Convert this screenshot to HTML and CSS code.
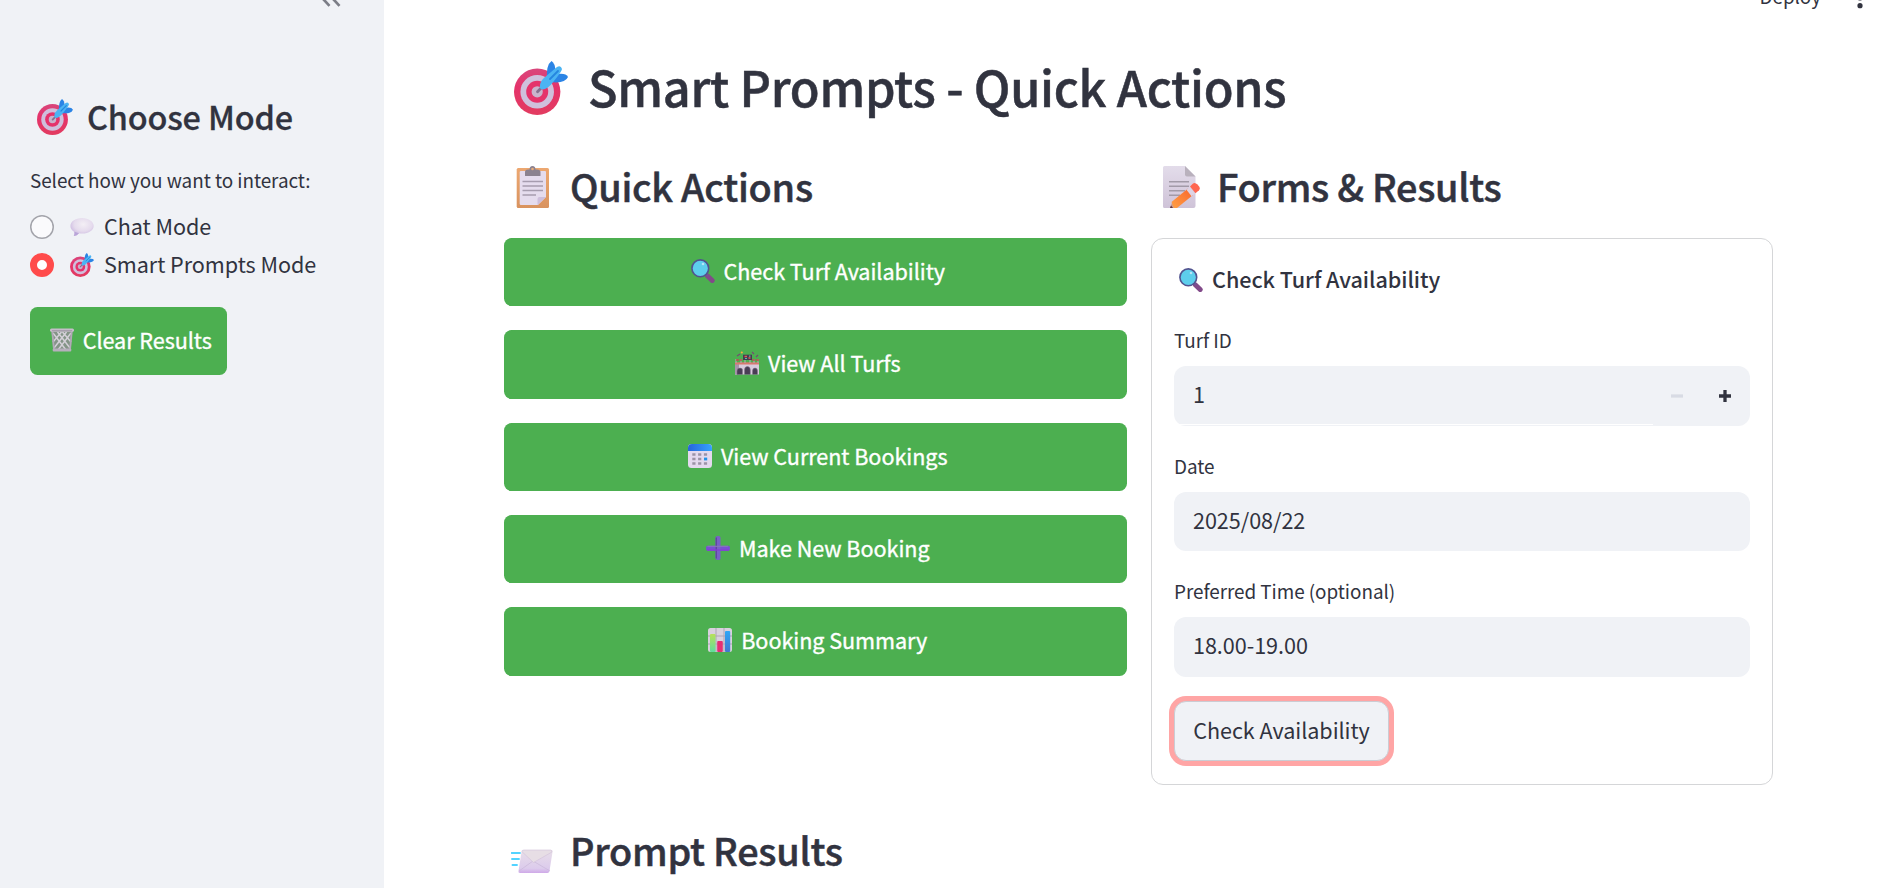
FILE: index.html
```html
<!DOCTYPE html>
<html lang="en">
<head>
<meta charset="utf-8">
<title>Smart Prompts</title>
<link rel="stylesheet" href="styles.css">
</head>
<body>
<svg class="defs" aria-hidden="true">
  <defs>
    <linearGradient id="g-red" x1="0" y1="0" x2="0" y2="1"><stop offset="0" stop-color="#d9467c"/><stop offset=".4" stop-color="#e5336b"/><stop offset="1" stop-color="#e23c60"/></linearGradient>
    <linearGradient id="g-pencil" x1="1" y1="0" x2="0" y2="1"><stop offset="0" stop-color="#f9662f"/><stop offset="1" stop-color="#ffa044"/></linearGradient>
    <linearGradient id="g-paper" x1="0" y1="0" x2="0" y2="1"><stop offset="0" stop-color="#e3dcea"/><stop offset="1" stop-color="#cfc3d8"/></linearGradient>
    <linearGradient id="g-board" x1="0" y1="0" x2="0" y2="1"><stop offset="0" stop-color="#eda871"/><stop offset="1" stop-color="#d9935f"/></linearGradient>
    <linearGradient id="g-mail" x1="0" y1="0" x2="0" y2="1"><stop offset="0" stop-color="#e8dfe8"/><stop offset=".8" stop-color="#dccbec"/><stop offset="1" stop-color="#cfa9e8"/></linearGradient>
    <linearGradient id="g-cal" x1="0" y1="0" x2="1" y2="0"><stop offset="0" stop-color="#2665dc"/><stop offset="1" stop-color="#36a2ff"/></linearGradient>
    <linearGradient id="g-bar" x1="0" y1="0" x2="0" y2="1"><stop offset="0" stop-color="#b8e05a"/><stop offset="1" stop-color="#5edf9c"/></linearGradient>
    <linearGradient id="g-blue" x1="0" y1="0" x2="0" y2="1"><stop offset="0" stop-color="#2fa6f7"/><stop offset="1" stop-color="#4078cf"/></linearGradient>
    <radialGradient id="g-bubble" cx=".55" cy=".35" r=".65"><stop offset="0" stop-color="#f3eff5"/><stop offset=".6" stop-color="#e5dbed"/><stop offset="1" stop-color="#c9b5df"/></radialGradient>
    <symbol id="target" viewBox="0 0 54 54">
      <circle cx="23.2" cy="30.8" r="23.2" fill="url(#g-red)"/>
      <circle cx="23.2" cy="30.8" r="16.8" fill="#cfc0dc"/>
      <circle cx="23.2" cy="30.8" r="11" fill="#e5336b"/>
      <circle cx="23.2" cy="30.8" r="5.6" fill="#c9b3cc"/>
      <path d="M23.5 30.8 31 23" stroke="#85708f" stroke-width="2.8" stroke-linecap="round"/>
      <path d="M33 18Q32 4 37.5 0Q41 2 41.5 10L36 19Z" fill="#2b84e5"/>
      <path d="M36 21Q51 23 54 16Q52 12 44 13Z" fill="#2b84e5"/>
      <path d="M26 25Q26 20 31 16L43 6Q47 4 48 8Q48 10 40 20Q34 28 29 28.5Q25 28 26 25Z" fill="#4bb4f3"/>
      <path d="M36 18 44 10" stroke="#2586df" stroke-width="1.8" stroke-linecap="round"/>
    </symbol>
    <symbol id="search" viewBox="0 0 24 24">
      <path d="M16.5 17 21.2 21.5" stroke="#824a89" stroke-width="5" stroke-linecap="round"/>
      <path d="M14.5 14.5 17 17" stroke="#765194" stroke-width="2.4"/>
      <circle cx="9.3" cy="9.3" r="8.4" fill="#5dceec" stroke="#51538f" stroke-width="1.6"/>
      <circle cx="12" cy="5" r="1.3" fill="#b5e5f7"/>
    </symbol>
  </defs>
</svg>
<div class="app">
  <aside class="sidebar">
    <div class="collapse">
      <svg width="20" height="18" viewBox="0 0 20 18"><path d="M8.5 1 1 8.8 8.5 16.8M18.5 1 11 8.8 18.5 16.8" fill="none" stroke="#7c7e87" stroke-width="2.7"/></svg>
    </div>
    <h2 class="side-title"><svg class="side-icon"><use href="#target"/></svg><span>Choose Mode</span></h2>
    <p class="side-label">Select how you want to interact:</p>
    <div class="option">
      <i class="radio"></i>
      <svg class="emoji" viewBox="0 0 24 24"><path d="M12 3C18.8 3 23.7 6.8 23.7 11S18.8 18.6 12.4 18.6Q10.4 18.6 9 18.3Q7 20.8 3.8 21Q5 19.5 4.4 17Q.4 14.6.4 11C.4 6.8 5.2 3 12 3Z" fill="url(#g-bubble)"/><path d="M4.400 16.800Q5 19.500 3.800 21Q7 20.800 9 18.300Z" fill="#b9a5d8"/></svg>
      <span>Chat Mode</span>
    </div>
    <div class="option">
      <i class="radio on"></i>
      <svg class="emoji"><use href="#target"/></svg>
      <span>Smart Prompts Mode</span>
    </div>
    <button class="btn clear">
      <svg class="emoji" viewBox="0 0 24 24"><path d="M1.500 2.500H22.500L20.800 22H3.200Z" fill="#849487"/><path d="M3 5 16 22M7.500 4 20 20M12.500 4 21 14M21 5 8 22M16.500 4 4 20M11.500 4 3 14" stroke="#d4d0d8" stroke-width="1.500" fill="none"/><path d="M2.200 3 4 22M21.800 3 20 22" stroke="#b1a9b6" stroke-width="1.800"/><rect x="0" y="0.500" width="24" height="3.300" rx="1.500" fill="#c5bdc9"/><path d="M2 2.700H22" stroke="#a098a7" stroke-width="1"/><rect x="2.700" y="20.500" width="18.600" height="3" rx="1" fill="#b7afbd"/></svg>
      <span>Clear Results</span>
    </button>
  </aside>
  <main class="main">
    <header class="top">
      <span class="deploy">Deploy</span>
      <svg width="6" height="22" viewBox="0 0 6 22"><circle cx="3" cy="3" r="2.600"/><circle cx="3" cy="11" r="2.600"/><circle cx="3" cy="18.700" r="2.600"/></svg>
    </header>
    <h1 class="title"><svg class="title-icon"><use href="#target"/></svg><span>Smart Prompts - Quick Actions</span></h1>
    <div class="columns">
      <section class="col">
        <h2 class="heading">
          <svg class="head-icon" viewBox="0 0 42 42"><rect x="4.700" y="2" width="32.300" height="40" rx="1.500" fill="url(#g-board)"/><path d="M9 5H33Q34 5 34 6V31L26 39H9Q7.700 39 7.700 37.500V6Q7.700 5 9 5Z" fill="#e5dcee"/><path d="M34 31 25.500 39V33Q25.500 31 27.500 31Z" fill="#cdbedb"/><path d="M10.500 15.500H31M10.500 20H31M10.500 24.500H31M10.500 29H24" stroke="#a69caf" stroke-width="1.600"/><path d="M13 9.500V6Q13 3.500 16 3.500H17.500Q17.500 0 20.500 0T23.500 3.500H25Q28.500 3.500 28.500 6V9.500Q28.500 10 28 10H13.500Q13 10 13 9.500Z" fill="#8b8290"/><circle cx="20.500" cy="3" r="1.300" fill="#e7ac79"/></svg>
          <span>Quick Actions</span>
        </h2>
        <div class="actions">
          <button class="btn"><svg class="emoji"><use href="#search"/></svg><span>Check Turf Availability</span></button>
          <button class="btn"><svg class="emoji" viewBox="0 0 24 24"><path d="M0 12H24V23.500H0Z" fill="#d9cbdc"/><path d="M0 12H4V23.500H0Z" fill="#a894ac"/><path d="M0 11.300H24V13.500H0Z" fill="#d9786f"/><path d="M1 8V12M6 8V12M10 9V12M15 9V12M19 8V12M23 8V12" stroke="#b7aebb" stroke-width="1"/><path d="M1 9H4M5 9H7M17 9H20M21 9H24" stroke="#b9504f" stroke-width="1.600"/><rect x="8" y="3.700" width="9" height="5.300" fill="#453b50"/><path d="M9.500 5.500h2.500M13.500 7h2" stroke="#e55b52" stroke-width="1.400"/><path d="M10 7.500h2M14 5.200h1.500" stroke="#55bdb0" stroke-width="1.200"/><path d="M2 5 5 3M19 3 17 1M21 6 23 4" stroke="#754c72" stroke-width="1.100"/><circle cx="6.800" cy="1.500" r="1.100" fill="#f3ad3d"/><path d="M2 23.500V20Q2 17 5 17T7.500 20V23.500M9.500 23.500V19Q9.500 15.500 12.400 15.500T15.300 19V23.500M17.500 23.500V20Q17.500 17 20 17T22.500 20V23.500" fill="#493d55" stroke="#85778d" stroke-width=".5"/></svg><span>View All Turfs</span></button>
          <button class="btn lower"><svg class="emoji" viewBox="0 0 24 24"><rect width="24" height="24" rx="3.500" fill="#e4d9ee"/><path d="M0 7V4Q0 0 4 0H20Q24 0 24 4V7Z" fill="url(#g-cal)"/><path d="M4.300 10.500H19.500M4.300 15H15M4.300 19.500H19.500" stroke="#9c92a6" stroke-width="2.600" stroke-dasharray="3.200 2.600"/><rect x="16" y="13.600" width="3.200" height="2.800" fill="#2592e8"/></svg><span>View Current Bookings</span></button>
          <button class="btn"><svg class="emoji" viewBox="0 0 24 24"><rect x="0" y="9.700" width="24" height="5" rx="1.800" fill="#7950d2"/><rect x="9.500" y="0" width="5" height="24" rx="1.800" fill="#7861c6"/><path d="M10.300 1.500V22.500" stroke="#61479f" stroke-width="1.400"/><path d="M1 14H23" stroke="#873bd8" stroke-width="1.300"/><path d="M1.500 10.300H22" stroke="#8b77bb" stroke-width="1"/></svg><span>Make New Booking</span></button>
          <button class="btn"><svg class="emoji" viewBox="0 0 24 24"><rect width="24" height="24" rx="2.500" fill="#d8d1dd"/><path d="M8 0V24M16 0V24M0 8H24M0 16H24" stroke="#aaa0b1" stroke-width=".9"/><rect x="2" y="6" width="5.500" height="18" rx="1" fill="url(#g-bar)"/><rect x="9.200" y="13" width="5.600" height="11" rx="1" fill="#e52f73"/><rect x="17" y="3" width="5.200" height="21" rx="1" fill="url(#g-blue)"/></svg><span>Booking Summary</span></button>
        </div>
      </section>
      <section class="col">
        <h2 class="heading">
          <svg class="head-icon memo" viewBox="0 0 42 42"><path d="M2.500 0H24L34.500 10.500V40Q34.500 42 32.500 42H3.500Q2 42 2 40.500V1.500Q2 0 3.500 0Z" fill="url(#g-paper)"/><path d="M24 0 34.500 10.500H26Q24 10.500 24 8.500Z" fill="#b9b1bd"/><path d="M8 15.800H28M8 20.300H28M8 24.800H24M8 29.200H19" stroke="#a29aa8" stroke-width="1.600"/><path d="M9 42 11.500 35.500 15.500 42Z" fill="#cf9b89"/><path d="M9 42 10 39.500 12 42Z" fill="#5e3341"/><path d="M10.500 36 27 22.500 32 29 16 42H13Z" fill="url(#g-pencil)"/><path d="M25.500 23.700 28.700 20.900 34 27.400 30.500 30.200Z" fill="#ddd4e5"/><path d="M29 20.500 32 17.500Q34 16 36.500 18.500L38.500 21Q39.500 22.800 38 24.200L34.500 27.200Z" fill="#ff6650"/></svg>
          <span>Forms &amp; Results</span>
        </h2>
        <form class="form">
          <div class="form-title"><svg class="emoji"><use href="#search"/></svg><span>Check Turf Availability</span></div>
          <label class="label">Turf ID</label>
          <div class="field number"><span>1</span><svg class="steps" viewBox="0 0 62 14" width="62" height="14"><path d="M1 7H13" stroke="#d8dbe4" stroke-width="3.300"/><path d="M49 7H61M55 1V13" stroke="#31333f" stroke-width="3.300"/></svg></div>
          <label class="label">Date</label>
          <div class="field"><span>2025/08/22</span></div>
          <label class="label">Preferred Time (optional)</label>
          <div class="field"><span>18.00-19.00</span></div>
          <button class="submit" type="button">Check Availability</button>
        </form>
      </section>
    </div>
    <h2 class="heading results">
      <svg class="head-icon mail" viewBox="0 0 42 42"><path d="M13 19H40Q42 19 41.500 21L38.500 40Q38 42 36.500 42H9Q7 42 7.500 40L10.500 21Q11 19 13 19Z" fill="url(#g-mail)"/><path d="M8 40 22 30 39 40" fill="none" stroke="#c9b7d8" stroke-width=".7"/><path d="M10.800 20.500 22.500 31.500 41 21Q41 19 39.500 19H13Q11 19 10.800 20.500Z" fill="#e7dee5" stroke="#d0bfd8" stroke-width=".6"/><path d="M.5 22H9M1 28H8M1.500 34H6" stroke="#53d3ff" stroke-width="1.900" stroke-linecap="round"/></svg>
      <span>Prompt Results</span>
    </h2>
  </main>
</div>
</body>
</html>
```
FILE: styles.css
```css
* { box-sizing: border-box; margin: 0; padding: 0; }
body {
  height: 888px;
  overflow: hidden;
  background: #fff;
  color: #31333f;
  font-family: "Noto Sans CJK SC", "Noto Sans", sans-serif;
  font-size: 21.6px;
  letter-spacing: -.05px;
  line-height: 38px;
}
.defs { position: absolute; width: 0; height: 0; }
svg { display: block; flex: none; }
span { white-space: nowrap; }
h1, h2 { display: flex; font-weight: 500; letter-spacing: -.25px; -webkit-text-stroke: .5px #31333f; }
h1 svg, h2 svg { -webkit-text-stroke: 0; }
.app { display: flex; height: 888px; }
.sidebar { width: 384px; flex: none; background: #f0f2f6; padding: 0 30px; }
.collapse { height: 94px; padding-left: 291px; overflow: hidden; }
.collapse svg { margin-top: -11px; }
.side-title { height: 44px; font-size: 32.4px; line-height: 44px; letter-spacing: -.15px; -webkit-text-stroke-width: .3px; }
.side-icon { width: 36px; height: 36px; margin: 5px 14px 0 7px; }
.side-label { margin-top: 27px; height: 43px; font-size: 18.9px; line-height: 30px; }
.option { display: flex; align-items: center; height: 38px; }
.option span { margin-top: -3px; }
.radio { width: 24px; height: 24px; border-radius: 50%; background: #fafafc; box-shadow: inset 0 0 0 1.5px #a3a4ab; margin-right: 16px; }
.radio.on { border: 7.5px solid #ff4b4b; background: #fff; box-shadow: none; }
.emoji { width: 24px; height: 24px; }
.option .emoji { margin-right: 10px; }
.btn {
  display: flex;
  align-items: center;
  justify-content: center;
  width: 100%;
  height: 68.4px;
  padding: 0 0 3px 4.5px;
  border: 0;
  border-radius: 7.5px;
  background: #4caf50;
  color: #fff;
  font: inherit;
  letter-spacing: inherit;
  -webkit-text-stroke: .35px #fff;
}
.btn svg { -webkit-text-stroke: 0; }
.btn .emoji { margin-right: 9px; }
.btn.lower { padding-bottom: 1.5px; }
.clear { width: 197px; margin-top: 23px; }
.main { flex: 1; padding: 0 123px 0 120px; min-width: 0; }
.top { display: flex; justify-content: flex-end; height: 54px; margin-right: -89px; }
.deploy { font-size: 18.9px; line-height: 30px; margin: -19px 36px 0 0; }
.top svg { margin-top: -13px; fill: #31333f; }
.title { height: 64px; font-size: 48.6px; line-height: 64px; letter-spacing: -.3px; }
.title-icon { width: 54px; height: 54px; margin: 7px 20px 0 10px; }
.columns { display: grid; grid-template-columns: 623px 622px; gap: 24px; margin-top: 42px; }
.heading { height: 50px; font-size: 37.8px; line-height: 50px; }
.head-icon { width: 42px; height: 42px; margin: 6px 16px 0 8px; }
.columns .heading { line-height: 52px; }
.memo { margin: 6px 14px 0 10px; }
.mail { margin: 6px 17px 0 7px; }
.actions { display: grid; gap: 23.9px; margin-top: 28px; }
.form { height: 547px; margin-top: 28px; padding: 21px 22px; border: 1px solid #d5d6d8; border-radius: 12px; }
.form-title { display: flex; height: 65.3px; line-height: 37px; font-weight: 500; }
.form-title .emoji { margin: 8px 9px 0 5px; }
.label { display: block; height: 41px; font-size: 18.9px; line-height: 30px; }
.field { display: flex; justify-content: space-between; height: 59.8px; margin-bottom: 24.5px; padding: 0 18px 0 19px; border-radius: 12px; background: #f0f2f6; line-height: 56px; }
.steps { margin-top: 23px; }
.number { background: linear-gradient(#fff, #fff) 0 58px / 479px 1px no-repeat #f0f2f6; }
.submit { display: block; width: 215px; height: 60px; padding-bottom: 2.5px; border: 1px solid #cbccd3; border-radius: 12px; background: #f0f2f6; box-shadow: 0 0 0 5px #ffa5a5; color: inherit; font: inherit; letter-spacing: inherit; }
.results { margin-top: 40px; }
```
